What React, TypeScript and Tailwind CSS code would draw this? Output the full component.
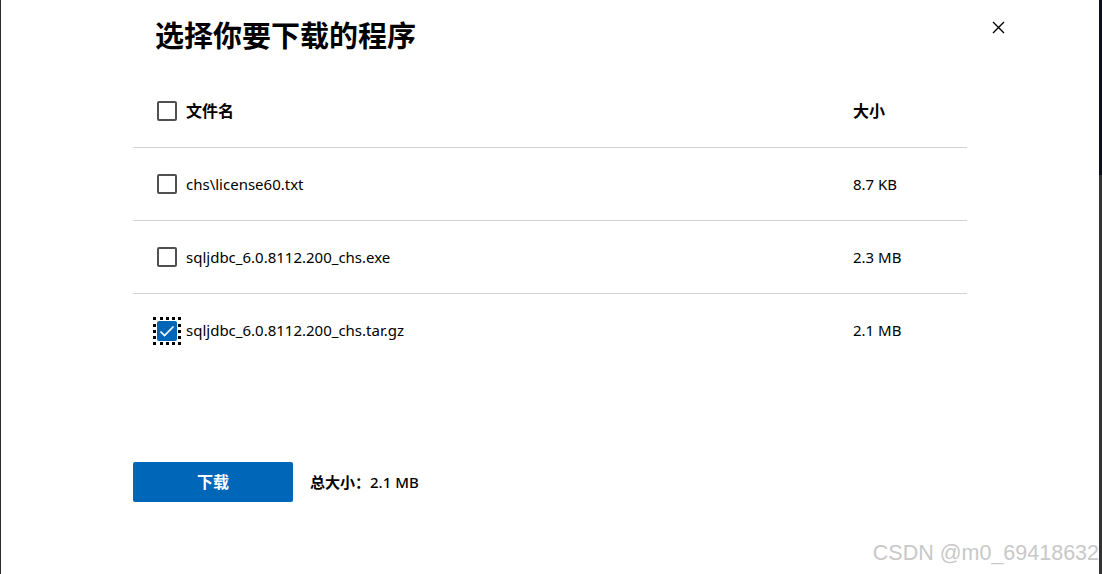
import React from "react";

const font = { fontFamily: '"Noto Sans", "Noto Sans CJK SC", sans-serif' };

function Box({ checked }: { checked?: boolean }) {
  if (checked) {
    return (
      <div className="relative w-[20px] h-[20px] shrink-0">
        <div className="absolute -inset-[4px] border-[3px] border-dotted border-black" />
        <div className="w-[20px] h-[20px] bg-[#0067b8] rounded-[2px] flex items-center justify-center">
          <svg width="16" height="14" viewBox="0 0 16 14" fill="none">
            <path d="M1.5 7.5 L5.5 11.5 L14.5 2.5" stroke="white" strokeWidth="1.7" />
          </svg>
        </div>
      </div>
    );
  }
  return <div className="w-[20px] h-[20px] shrink-0 border-2 border-[#505050] rounded-[2px] bg-white" />;
}

function Row({ name, size, checked, border }: { name: string; size: string; checked?: boolean; border?: boolean }) {
  return (
    <div className={"flex items-center h-[73px] " + (border ? "border-b border-[#d2d2d2]" : "")}>
      <div className="w-[720px] flex items-center pl-[24px] gap-[9px]">
        <Box checked={checked} />
        <span className="text-[15px] text-black">{name}</span>
      </div>
      <span className="text-[15px] text-black">{size}</span>
    </div>
  );
}

export default function App() {
  return (
    <div className="w-[1102px] h-[574px] bg-white flex overflow-hidden relative" style={font}>
      <div className="w-[1px] h-full bg-[#2b2b2b]" />
      <div className="flex-1 pl-[132px] relative">
        <h1 className="mt-[18px] ml-[22px] text-[29px] leading-[36px] font-bold text-black">选择你要下载的程序</h1>
        <div className="w-[834px] mt-[21px]">
          <div className="flex items-center h-[73px] border-b border-[#d2d2d2]">
            <div className="w-[720px] flex items-center pl-[24px] gap-[9px]">
              <Box />
              <span className="text-[16px] font-bold text-black">文件名</span>
            </div>
            <span className="text-[16px] font-bold text-black">大小</span>
          </div>
          <Row name="chs\license60.txt" size="8.7 KB" border />
          <Row name="sqljdbc_6.0.8112.200_chs.exe" size="2.3 MB" border />
          <Row name="sqljdbc_6.0.8112.200_chs.tar.gz" size="2.1 MB" checked />
        </div>
        <div className="mt-[95px] flex items-center">
          <button className="w-[160px] h-[40px] bg-[#0067b8] text-white text-[16px] font-bold rounded-[2px]">下载</button>
          <div className="ml-[17px] text-[15px] text-black">
            <span className="font-bold">总大小：</span>
            <span className="font-medium">2.1 MB</span>
          </div>
        </div>
        <button className="absolute top-[20px] left-[990px] w-[14px] h-[14px] flex items-center justify-center">
          <svg width="13" height="13" viewBox="0 0 13 13">
            <path d="M1 1 L12 12 M12 1 L1 12" stroke="black" strokeWidth="1.4" />
          </svg>
        </button>
        <div
          className="absolute right-[0px] bottom-[5px] text-[21.5px] text-[#c8c8c8] whitespace-nowrap"
          style={{ fontFamily: '"Liberation Sans", Arial, sans-serif' }}
        >
          CSDN @m0_69418632
        </div>
      </div>
      <div className="w-[3px] h-full flex flex-col">
        <div className="h-[175px] bg-[#0a0f1a]" />
        <div className="flex-1 bg-[#333333]" />
      </div>
    </div>
  );
}
